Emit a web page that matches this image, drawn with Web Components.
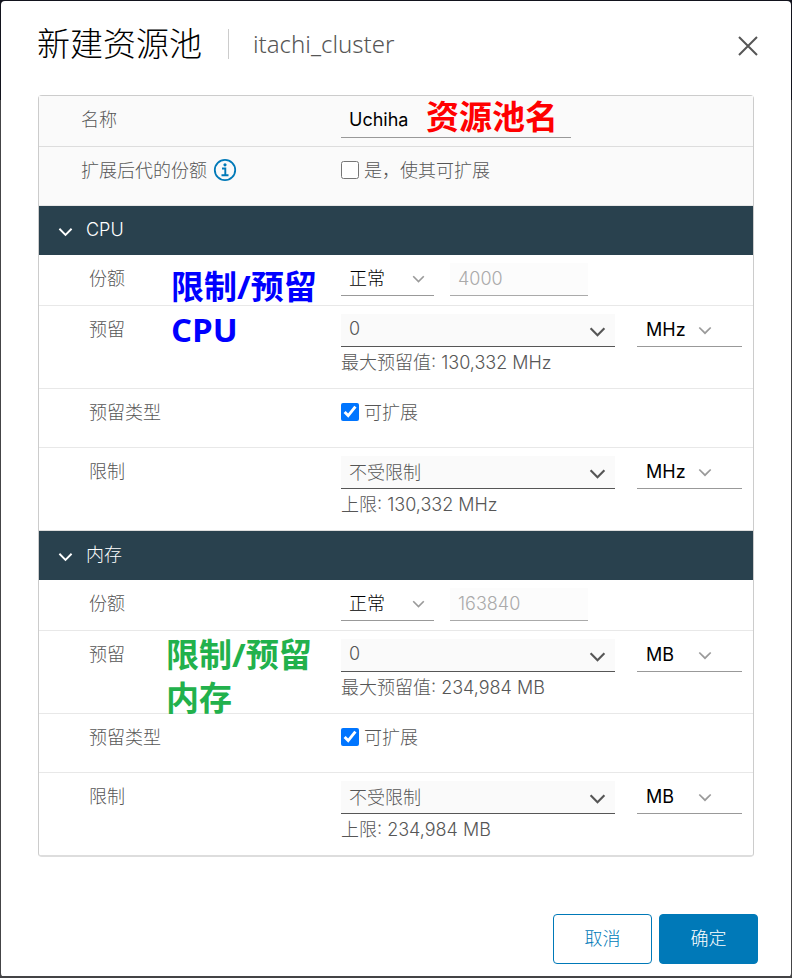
<!DOCTYPE html>
<html lang="zh-CN">
<head>
<meta charset="utf-8">
<meta name="viewport" content="width=device-width, initial-scale=1">
<title>新建资源池</title>
<style>
  html { background: linear-gradient(#12131d 100px, #444446 100px); min-height: 100%; }
  body {
    margin: 0;
    font: 300 18px/24px Inter, "Noto Sans CJK SC", sans-serif;
    color: #565656;
  }
</style>
</head>
<body>
<pool-dialog heading="新建资源池" context="itachi_cluster">
  <settings-panel>
    <name-row label="名称" value="Uchiha" shaded>
      <hand-note style="--x:387px; --y:-1px; --ink:#f00">资源池名</hand-note>
    </name-row>
    <check-row label="扩展后代的份额" text="是，使其可扩展" info shaded></check-row>
    <resource-group heading="CPU">
      <share-row label="份额" value="4000">
        <hand-note style="--x:132px; --y:10px; --ink:#00f">限制/预留<br>CPU</hand-note>
      </share-row>
      <amount-row label="预留" value="0" unit="MHz" hint="最大预留值: 130,332 MHz"></amount-row>
      <check-row label="预留类型" text="可扩展" checked></check-row>
      <amount-row label="限制" value="不受限制" unit="MHz" hint="上限: 130,332 MHz"></amount-row>
    </resource-group>
    <resource-group heading="内存">
      <share-row label="份额" value="163840"></share-row>
      <amount-row label="预留" value="0" unit="MB" hint="最大预留值: 234,984 MB">
        <hand-note style="--x:127px; --y:2px; --ink:#22b14c">限制/预留<br>内存</hand-note>
      </amount-row>
      <check-row label="预留类型" text="可扩展" checked></check-row>
      <amount-row label="限制" value="不受限制" unit="MB" hint="上限: 234,984 MB"></amount-row>
    </resource-group>
  </settings-panel>
</pool-dialog>

<script>
const chevron = (w, cls = '') =>
  `<svg class="chev ${cls}" width="${w}" height="${w}" viewBox="0 0 16 16" fill="none" stroke="currentColor" stroke-width="2" aria-hidden="true"><path d="M1.500 4l6.500 6.500L14.500 4"/></svg>`;

class PoolDialog extends HTMLElement {
  connectedCallback() {
    this.attachShadow({ mode: 'open' }).innerHTML = `
      <style>
        :host { display: flex; flex-direction: column; box-sizing: border-box; margin: 0 1px;
          min-height: calc(100vh - 2px); background: #fff; border-radius: 4px;
          padding: 23px 37px 13px; position: relative; top: 1px; }
        header { display: flex; align-items: center; height: 40px; margin: 0 0 31px -1px; }
        h1 { margin: 0; font-size: 33px; line-height: 40px; font-weight: 300; color: #000; flex: none; }
        .context { margin-left: 26px; padding-left: 24px; border-left: 1px solid #ccc;
          font: 300 24px/30px "Noto Sans", "Noto Sans CJK SC", sans-serif; }
        .close { margin-left: auto; margin-right: -6px; padding: 0; width: 24px; height: 24px; border: 0;
          background: none; color: #565656; }
        .close svg { display: block; }
        footer { display: flex; justify-content: flex-end; gap: 7px; margin: auto -4px 0 0; padding-top: 24px; }
        footer button { font: inherit; width: 99px; height: 50px; border-radius: 4px;
          border: 1px solid #0079b8; background: #fff; color: #0079b8; }
        footer .primary { background: #0079b8; color: #fff; }
      </style>
      <header>
        <h1></h1><span class="context"></span>
        <button class="close" aria-label="关闭"><svg width="24" height="24" viewBox="0 0 24 24" fill="none" stroke="currentColor" stroke-width="2"><path d="M3 5l18 18M21 5L3 23"/></svg></button>
      </header>
      <slot></slot>
      <footer><button>取消</button><button class="primary">确定</button></footer>`;
    this.shadowRoot.querySelector('h1').textContent = this.getAttribute('heading');
    this.shadowRoot.querySelector('.context').textContent = this.getAttribute('context');
  }
}

class SettingsPanel extends HTMLElement {
  connectedCallback() {
    this.attachShadow({ mode: 'open' }).innerHTML = `
      <style>:host { display: block; border: 1px solid #ccc; border-bottom-color: #ddd; border-radius: 4px; }</style>
      <slot></slot>`;
  }
}

class ResourceGroup extends HTMLElement {
  connectedCallback() {
    this.attachShadow({ mode: 'open' }).innerHTML = `
      <style>
        :host { display: block; --indent: 50px; }
        button { display: flex; align-items: center; gap: 13px; width: 100%; height: 49px; border: 0;
          padding: 0 19px 2px; background: #29414e; color: #fff; font: inherit; text-align: left; }
        .chev { margin-top: 5px; }
      </style>
      <button aria-expanded="true">${chevron(15)}<span>${this.getAttribute('heading')}</span></button>
      <slot></slot>`;
  }
}

const rowStyle = `
  :host { display: grid; grid-template-columns: minmax(0, 302fr) minmax(0, 412fr); position: relative;
    box-sizing: border-box; border-bottom: 1px solid #e8e8e8; padding: 8px 0 9px; }
  :host([shaded]) { background: #fafafa; }
  :host(:last-child) { border-bottom-color: #ddd; }
  .name { padding-left: var(--indent, 42px); padding-top: 4px; line-height: 24px; display: flex; gap: 6px; }
  .controls { display: flex; padding-right: 11px; }
  input, select { font: inherit; color: inherit; box-sizing: border-box; margin: 0; }
  .line { width: 100%; height: 33px; border: 0; border-bottom: 1px solid #999; border-radius: 0;
    background: none; padding: 0 8px; appearance: none; }
  .line.dark { color: #565656; background: #fafafa; border-bottom-color: #565656; padding-bottom: 3px; }
  .wrap { display: grid; align-items: center; color: #000; }
  .wrap > * { grid-area: 1 / 1; }
  .chev { justify-self: end; margin-right: 9px; color: #9a9a9a; pointer-events: none; }
  .check { display: flex; gap: 5px; align-items: center; height: 29px; }
  .check input { width: 18px; height: 18px; accent-color: #0075ff; }
  .check label { padding-top: 2px; }
`;

class Row extends HTMLElement {
  connectedCallback() {
    const a = n => this.getAttribute(n);
    this.attachShadow({ mode: 'open' }).innerHTML =
      `<style>${rowStyle}${this.css || ''}</style>${this.markup(a)}<slot></slot>`;
  }
}

class NameRow extends Row {
  css = `.line { width: 230px; height: 34px; padding-bottom: 3px; color: #000; font-weight: 400; }
    :host { border-bottom-color: #ddd; padding-bottom: 8px; }`;
  markup(a) {
    return `<label class="name" for="f">${a('label')}</label>
      <div class="controls"><input class="line" id="f" value="${a('value')}"></div>`;
  }
}

class CheckRow extends Row {
  css = `:host { padding-bottom: 21px; } .info { margin-top: -1px; }`;
  markup(a) {
    const info = this.hasAttribute('info')
      ? `<svg class="info" width="24" height="24" viewBox="0 0 24 24" aria-hidden="true"><circle cx="12" cy="12" r="10.200" fill="none" stroke="#0079b8" stroke-width="1.800"/><circle cx="12" cy="6.800" r="1.600" fill="#0079b8"/><path d="M9 10.500h3.300v6.500M8.500 17.300h7" fill="none" stroke="#0079b8" stroke-width="1.900"/></svg>` : '';
    return `<div class="name"><span>${a('label')}</span>${info}</div>
      <div class="controls check"><input type="checkbox" id="f" ${this.hasAttribute('checked') ? 'checked' : ''}><label for="f">${a('text')}</label></div>`;
  }
}

class ShareRow extends Row {
  css = `.controls { gap: 16px; } .level { width: 93px; }
    .amount { width: 138px; color: #aaa; background: #fcfcfc; border-bottom-color: #aaa; padding-bottom: 2px; }`;
  markup(a) {
    return `<label class="name" for="f">${a('label')}</label>
      <div class="controls">
        <div class="wrap level"><select class="line" id="f"><option>正常</option></select>${chevron(13)}</div>
        <input class="line amount" aria-label="份额值" value="${a('value')}" disabled>
      </div>`;
  }
}

class AmountRow extends Row {
  css = `.controls { display: grid; grid-template-columns: minmax(0, 1fr) 105px; column-gap: 22px; }
    .unit select { font-weight: 400; padding-left: 9px; } .unit .chev { margin-right: 30px; }
    .combo .chev { color: #565656; margin: 3px 9px 0 0; } .hint { margin-top: 4px; height: 28px; line-height: 24px; }`;
  markup(a) {
    return `<label class="name" for="f">${a('label')}</label>
      <div class="controls">
        <div class="wrap combo"><input class="line dark" id="f" role="combobox" aria-expanded="false" value="${a('value')}">${chevron(17)}</div>
        <div class="wrap unit"><select class="line" aria-label="单位"><option>${a('unit')}</option></select>${chevron(14)}</div>
        <div class="hint">${a('hint')}</div>
      </div>`;
  }
}

class HandNote extends HTMLElement {
  connectedCallback() {
    this.attachShadow({ mode: 'open' }).innerHTML = `
      <style>:host { position: absolute; left: var(--x); top: var(--y); z-index: 2; color: var(--ink);
        font: bold 33px/43px "Open Sans", "Noto Sans CJK SC", sans-serif; white-space: nowrap; pointer-events: none; }</style>
      <slot></slot>`;
  }
}

customElements.define('hand-note', HandNote);
customElements.define('name-row', NameRow);
customElements.define('check-row', CheckRow);
customElements.define('share-row', ShareRow);
customElements.define('amount-row', AmountRow);
customElements.define('resource-group', ResourceGroup);
customElements.define('settings-panel', SettingsPanel);
customElements.define('pool-dialog', PoolDialog);
</script>
</body>
</html>
